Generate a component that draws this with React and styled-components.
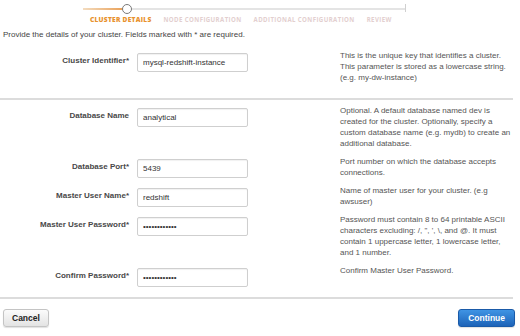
import React from "react";
import styled, { createGlobalStyle } from "styled-components";

const Global = createGlobalStyle`
  html, body { margin: 0; padding: 0; background: #fff; }
  body { font-family: "Liberation Sans", Arial, sans-serif; color: #444; width: 520px; height: 336px; overflow: hidden; }
  * { box-sizing: border-box; }
`;

const Page = styled.div`
  width: 520px;
  height: 336px;
  display: flex;
  flex-direction: column;
  padding: 0 5px 0 0;
`;

const Stepper = styled.div`
  display: flex;
  flex-direction: column;
  padding: 8px 0 0 83px;
`;

const Track = styled.div`
  position: relative;
  width: 323px;
  height: 2px;
  background: #e4e4e4;
  &::after {
    content: "";
    position: absolute;
    right: 0;
    top: -4px;
    width: 1px;
    height: 8px;
    background: #d0d0d0;
  }
`;

const TrackFill = styled.div`
  height: 2px;
  background: linear-gradient(to right, #f3dcc0, #eaa25a);
`;

const Knob = styled.div`
  position: absolute;
  top: -4px;
  width: 10px;
  height: 10px;
  border-radius: 50%;
  border: 1.5px solid #7a7a7a;
  background: #fff;
`;

const StepLabels = styled.div`
  display: flex;
  align-items: baseline;
  gap: 12px;
  padding: 5px 0 0 7px;
`;

const StepLabel = styled.span`
  font-family: "Open Sans", sans-serif;
  font-size: ${(p) => (p.$active ? "6.6px" : "6.1px")};
  font-weight: ${(p) => (p.$active ? 800 : 700)};
  letter-spacing: ${(p) => (p.$active ? "0.25px" : "0.4px")};
  text-transform: uppercase;
  color: ${(p) => (p.$active ? "#e8922e" : "#e3cfcf")};
`;

const Intro = styled.p`
  margin: 5px 0 0 3px;
  font-size: 8px;
  line-height: 11px;
  color: #444;
`;

const Section = styled.div`
  display: flex;
  flex-direction: column;
  gap: 8px;
  padding: ${(p) => p.$pad};
`;

const Row = styled.div`
  display: grid;
  grid-template-columns: 129px 195px 175px;
  column-gap: 8px;
  align-items: start;
`;

const Label = styled.label`
  height: 19px;
  display: flex;
  align-items: center;
  justify-content: flex-end;
  font-size: 8px;
  font-weight: 700;
  color: #484848;
  white-space: nowrap;
`;

const Input = styled.input`
  width: 111px;
  height: 19px;
  border: 1px solid #cfcfcf;
  border-radius: 2px;
  box-shadow: inset 0 1px 1px rgba(0, 0, 0, 0.06);
  padding: 0 5px;
  font-family: "Liberation Sans", Arial, sans-serif;
  font-size: 8px;
  color: #333;
  background: #fff;
  outline: none;
`;

const Help = styled.div`
  margin-top: -1px;
  font-size: 8px;
  line-height: 11px;
  color: #555;
  white-space: nowrap;
`;

const Divider = styled.hr`
  margin: 0;
  border: 0;
  height: 2px;
  width: 513px;
  background: #dcdcdc;
`;

const Footer = styled.div`
  display: flex;
  justify-content: space-between;
  padding: 10px 0 0 3px;
`;

const Button = styled.button`
  height: 18px;
  padding: 0 ${(p) => (p.$primary ? "9px" : "8px")};
  border-radius: 3px;
  font-family: "Liberation Sans", Arial, sans-serif;
  font-size: 8.5px;
  font-weight: 700;
  cursor: pointer;
  color: ${(p) => (p.$primary ? "#fff" : "#222")};
  border: 1px solid ${(p) => (p.$primary ? "#1a5aa8" : "#c4c4c4")};
  background: ${(p) =>
    p.$primary
      ? "linear-gradient(to bottom, #3f94e4, #1d63b8)"
      : "linear-gradient(to bottom, #fbfbfb, #e3e3e3)"};
  box-shadow: 0 1px 1px rgba(0, 0, 0, 0.12);
`;

const rows1 = [
  {
    label: "Cluster Identifier*",
    value: "mysql-redshift-instance",
    help: [
      "This is the unique key that identifies a cluster.",
      "This parameter is stored as a lowercase string.",
      "(e.g. my-dw-instance)",
    ],
  },
];

const rows2 = [
  {
    label: "Database Name",
    value: "analytical",
    help: [
      "Optional. A default database named dev is",
      "created for the cluster. Optionally, specify a",
      "custom database name (e.g. mydb) to create an",
      "additional database.",
    ],
  },
  {
    label: "Database Port*",
    value: "5439",
    help: ["Port number on which the database accepts", "connections."],
  },
  {
    label: "Master User Name*",
    value: "redshift",
    help: ["Name of master user for your cluster. (e.g", "awsuser)"],
  },
  {
    label: "Master User Password*",
    value: "abcdefghijkl",
    type: "password",
    help: [
      "Password must contain 8 to 64 printable ASCII",
      "characters excluding: /, \", ', \\, and @. It must",
      "contain 1 uppercase letter, 1 lowercase letter,",
      "and 1 number.",
    ],
  },
  {
    label: "Confirm Password*",
    value: "abcdefghijkl",
    type: "password",
    help: ["Confirm Master User Password."],
  },
];

function FieldRow({ label, value, type, help }) {
  return (
    <Row>
      <Label>{label}</Label>
      <div>
        <Input type={type || "text"} defaultValue={value} readOnly />
      </div>
      <Help>
        {help.map((l, i) => (
          <div key={i}>{l}</div>
        ))}
      </Help>
    </Row>
  );
}

const steps = ["Cluster Details", "Node Configuration", "Additional Configuration", "Review"];

export default function App() {
  return (
    <Page>
      <Global />
      <Stepper>
        <Track>
          <TrackFill style={{ width: "40px" }} />
          <Knob style={{ left: "39px" }} />
        </Track>
        <StepLabels>
          {steps.map((s, i) => (
            <StepLabel key={s} $active={i === 0}>
              {s}
            </StepLabel>
          ))}
        </StepLabels>
      </Stepper>
      <Intro>Provide the details of your cluster. Fields marked with * are required.</Intro>
      <Section $pad="11px 0 15px">
        {rows1.map((r) => (
          <FieldRow key={r.label} {...r} />
        ))}
      </Section>
      <Divider />
      <Section $pad="6px 0 10px">
        {rows2.map((r) => (
          <FieldRow key={r.label} {...r} />
        ))}
      </Section>
      <Divider />
      <Footer>
        <Button>Cancel</Button>
        <Button $primary>Continue</Button>
      </Footer>
    </Page>
  );
}
